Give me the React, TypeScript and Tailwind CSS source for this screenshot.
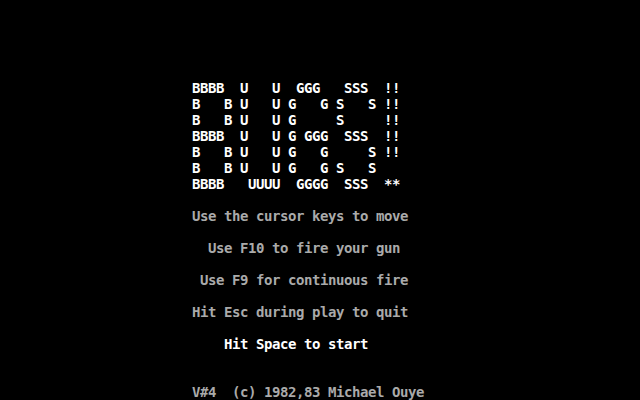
import React from 'react';

type Line = { row: number; col: number; text: string; bright?: boolean };

const lines: Line[] = [
  { row: 5, col: 24, text: 'BBBB  U   U  GGG   SSS  !!', bright: true },
  { row: 6, col: 24, text: 'B   B U   U G   G S   S !!', bright: true },
  { row: 7, col: 24, text: 'B   B U   U G     S     !!', bright: true },
  { row: 8, col: 24, text: 'BBBB  U   U G GGG  SSS  !!', bright: true },
  { row: 9, col: 24, text: 'B   B U   U G   G     S !!', bright: true },
  { row: 10, col: 24, text: 'B   B U   U G   G S   S', bright: true },
  { row: 11, col: 24, text: 'BBBB   UUUU  GGGG  SSS  **', bright: true },
  { row: 13, col: 24, text: 'Use the cursor keys to move' },
  { row: 15, col: 26, text: 'Use F10 to fire your gun' },
  { row: 17, col: 25, text: 'Use F9 for continuous fire' },
  { row: 19, col: 24, text: 'Hit Esc during play to quit' },
  { row: 21, col: 28, text: 'Hit Space to start', bright: true },
  { row: 24, col: 24, text: 'V#4  (c) 1982,83 Michael Ouye' },
];

const App = () => {
  const rows = Array.from({ length: 25 }, (_, r) => lines.find((l) => l.row === r));

  return (
    <div className="w-[640px] h-[400px] bg-black overflow-hidden flex flex-col font-['DejaVu_Sans_Mono',monospace] font-bold text-[14px] tracking-[-0.43px]">
      {rows.map((line, r) => (
        <div key={r} className="h-4 leading-4 whitespace-pre">
          {line && (
            <span className={line.bright ? 'text-white' : 'text-[#aaaaaa]'}>
              {' '.repeat(line.col) + line.text}
            </span>
          )}
        </div>
      ))}
    </div>
  );
};

export default App;
